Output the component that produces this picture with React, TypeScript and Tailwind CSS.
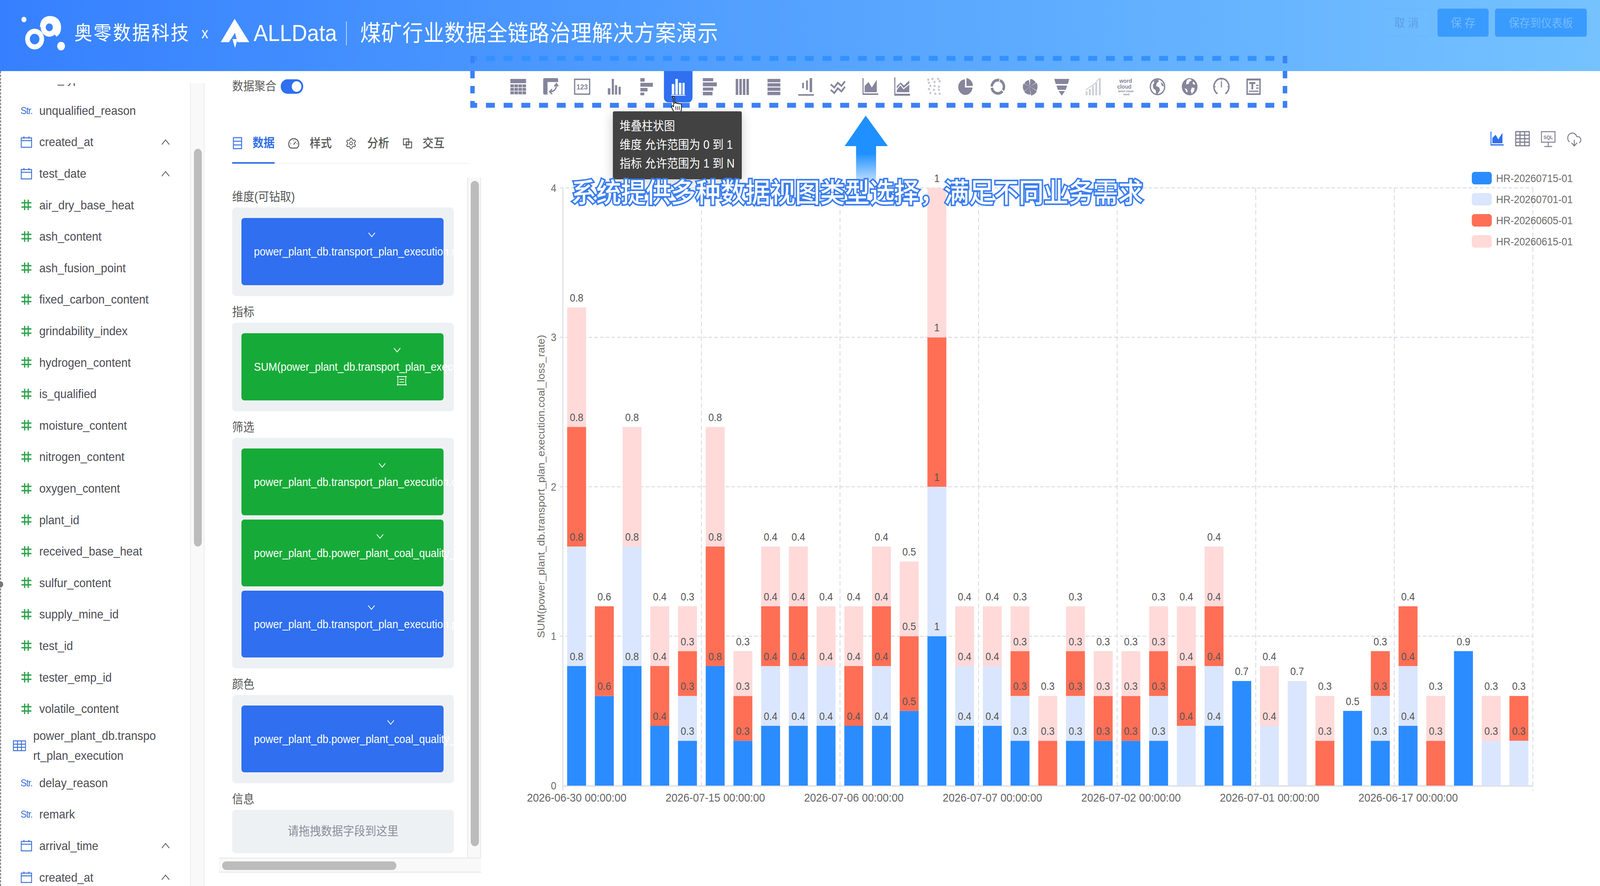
import { ReactNode } from 'react';
import { CloudDownload, Settings } from 'lucide-react';

type FieldType = 'str' | 'date' | 'num' | 'none';

const fieldsTop: [string, FieldType][] = [
  ['test_type', 'none'],
  ['unqualified_reason', 'str'],
  ['created_at', 'date'],
  ['test_date', 'date'],
  ['air_dry_base_heat', 'num'],
  ['ash_content', 'num'],
  ['ash_fusion_point', 'num'],
  ['fixed_carbon_content', 'num'],
  ['grindability_index', 'num'],
  ['hydrogen_content', 'num'],
  ['is_qualified', 'num'],
  ['moisture_content', 'num'],
  ['nitrogen_content', 'num'],
  ['oxygen_content', 'num'],
  ['plant_id', 'num'],
  ['received_base_heat', 'num'],
  ['sulfur_content', 'num'],
  ['supply_mine_id', 'num'],
  ['test_id', 'num'],
  ['tester_emp_id', 'num'],
  ['volatile_content', 'num'],
];

const fieldsBottom: [string, FieldType][] = [
  ['delay_reason', 'str'],
  ['remark', 'str'],
  ['arrival_time', 'date'],
  ['created_at', 'date'],
];

// blue, light blue, red, pink
const bars: number[][] = [
  [0.8, 0.8, 0.8, 0.8], [0.6, 0, 0.6, 0], [0.8, 0.8, 0, 0.8], [0.4, 0, 0.4, 0.4], [0.3, 0.3, 0.3, 0.3],
  [0.8, 0, 0.8, 0.8], [0.3, 0, 0.3, 0.3], [0.4, 0.4, 0.4, 0.4], [0.4, 0.4, 0.4, 0.4], [0.4, 0.4, 0, 0.4],
  [0.4, 0, 0.4, 0.4], [0.4, 0.4, 0.4, 0.4], [0.5, 0, 0.5, 0.5], [1, 1, 1, 1], [0.4, 0.4, 0, 0.4],
  [0.4, 0.4, 0, 0.4], [0.3, 0.3, 0.3, 0.3], [0, 0, 0.3, 0.3], [0.3, 0.3, 0.3, 0.3], [0.3, 0, 0.3, 0.3],
  [0.3, 0, 0.3, 0.3], [0.3, 0.3, 0.3, 0.3], [0, 0.4, 0.4, 0.4], [0.4, 0.4, 0.4, 0.4], [0.7, 0, 0, 0],
  [0, 0.4, 0, 0.4], [0, 0.7, 0, 0], [0, 0, 0.3, 0.3], [0.5, 0, 0, 0], [0.3, 0.3, 0.3, 0],
  [0.4, 0.4, 0.4, 0], [0, 0, 0.3, 0.3], [0.9, 0, 0, 0], [0, 0.3, 0, 0.3], [0, 0.3, 0.3, 0],
];

const barColors = ['#2b8cff', '#dae6fd', '#ff6f56', '#ffdad9'];
const xLabels = ['2026-06-30', '2026-07-15', '2026-07-06', '2026-07-07', '2026-07-02', '2026-07-01', '2026-06-17'];
const legend = ['HR-20260715-01', 'HR-20260701-01', 'HR-20260605-01', 'HR-20260615-01'];

const UNIT = 382.5;
const BASE = 2011;
const STEP = 77.6;
const LEFT = 1576;

const segments = bars.flatMap((vals, i) => {
  let acc = 0;
  return vals.flatMap((v, s) => {
    if (!v) return [];
    acc += v;
    return [{ id: `${i}-${s}`, x: LEFT + STEP * i + 12, top: BASE - acc * UNIT, h: v * UNIT, v, color: barColors[s] }];
  });
});

const wedge = (a0: number, a1: number, r: number) => {
  const p = (a: number) => `${24 + r * Math.sin((a * Math.PI) / 180)} ${24 - r * Math.cos((a * Math.PI) / 180)}`;
  return `M24 24 L${p(a0)} A${r} ${r} 0 0 1 ${p(a1)} Z`;
};

const FieldIcon = ({ type }: { type: FieldType }) => {
  if (type === 'str') {
    return <span className="whitespace-nowrap text-[26px] leading-none font-medium tracking-[-1.5px] text-[#3f73d8]">Str.</span>;
  }
  if (type === 'date') {
    return (
      <svg width="32" height="31" viewBox="0 0 32 31" fill="none" stroke="#3f73d8" strokeWidth="2.5">
        <rect x="1.5" y="5" width="29" height="24" />
        <path d="M1.5 12H30.5M9 1V7M23 1V7" />
      </svg>
    );
  }
  if (type === 'num') {
    return (
      <svg width="32" height="29" viewBox="0 0 32 29" fill="none" stroke="#2ca24c" strokeWidth="3.5">
        <path d="M2 9H30M2 20H30M11 1V28M21 1V28" />
      </svg>
    );
  }
  return <span className="w-[32px]" />;
};

const Field = ({ name, type }: { name: string; type: FieldType }) => (
  <div className="flex h-[80.6px] items-center pl-[55px] pr-[57px]">
    <div className="flex w-[32px] justify-center">
      <FieldIcon type={type} />
    </div>
    <span className="ml-[20px] flex-1 text-[32px] text-[#4c4c54]">{name}</span>
    {type === 'date' && (
      <svg width="23" height="17" viewBox="0 0 23 17" fill="none" stroke="#555" strokeWidth="2">
        <path d="M1 15L11.5 3L22 15" />
      </svg>
    )}
  </div>
);

const Chevron = ({ className = '' }: { className?: string }) => (
  <svg className={className} width="20" height="14" viewBox="0 0 20 14" fill="none" stroke="#fff" strokeWidth="2">
    <path d="M1 2L10 12L19 2" />
  </svg>
);

const Pill = ({ text, color, tall, chevronClass, extra }: { text: string; color: string; tall?: boolean; chevronClass?: string; extra?: ReactNode }) => (
  <div className={`${tall ? 'h-[172px]' : 'h-[171px]'} w-[566px] rounded-[8px] pl-[35px] pt-[33px] text-white ${color}`}>
    <div className="inline-flex w-max flex-col items-center">
      <Chevron className={chevronClass} />
      <div className="mt-[10px] flex h-[52px] items-center whitespace-nowrap text-[29.3px]">{text}</div>
      {extra}
    </div>
  </div>
);

const Section = ({ label, children }: { label: string; children: ReactNode }) => (
  <div>
    <div className="mt-[14px] flex h-[54px] items-center text-[31px] text-[#555]">{label}</div>
    {children}
  </div>
);

const Box = ({ children }: { children: ReactNode }) => (
  <div className="flex w-[621px] flex-col gap-[11px] overflow-hidden rounded-[10px] bg-[#eef1f4] pb-[28px] pl-[26px] pt-[27px]">{children}</div>
);

const ChartIcon = ({ i }: { i: number }) => {
  const c = 'currentColor';
  const rows = [0, 1, 2, 3];
  switch (i) {
    case 0:
      return (
        <g fill={c}>
          <rect x="2" y="4" width="44" height="11" />
          {[18, 27, 36].map(y => rows.map(k => <rect key={`${y}${k}`} x={2 + k * 11.3} y={y} width="10" height="7.5" />))}
        </g>
      );
    case 1:
      return (
        <g>
          <path fill={c} d="M4 6a4 4 0 0 1 4-4h34a4 4 0 0 1 4 4v6H16v32h-8a4 4 0 0 1-4-4z" />
          <path fill="none" stroke={c} strokeWidth="3.5" d="M41 17c1 12-6 19-17 20M35 23l6-7 5 7M29 30l-7 7 7 6" />
        </g>
      );
    case 2:
      return (
        <g>
          <rect x="3" y="5" width="42" height="38" fill="none" stroke={c} strokeWidth="3.5" />
          <text x="24" y="31" textAnchor="middle" fontSize="19" fill={c} fontWeight="700">123</text>
        </g>
      );
    case 3:
      return (
        <g fill={c}>
          <rect x="6" y="28" width="7" height="16" />
          <rect x="17" y="4" width="6" height="40" />
          <rect x="26" y="20" width="6" height="24" />
          <rect x="36" y="24" width="6" height="20" />
        </g>
      );
    case 4:
      return (
        <g fill={c}>
          <rect x="8" y="2" width="12" height="9" />
          <rect x="8" y="14" width="35" height="10" />
          <rect x="8" y="27" width="20" height="9" />
          <rect x="8" y="39" width="11" height="7" />
        </g>
      );
    case 5:
      return (
        <g fill={c}>
          <rect x="6" y="17" width="7" height="27" />
          <rect x="16" y="4" width="7" height="40" />
          <rect x="26" y="14" width="7" height="30" />
          <rect x="36" y="14" width="6" height="30" />
          <rect x="4" y="45" width="40" height="2" />
        </g>
      );
    case 6:
      return (
        <g fill={c}>
          <rect x="4" y="2" width="29" height="8" />
          <rect x="4" y="13" width="39" height="10" />
          <rect x="4" y="26" width="29" height="8" />
          <rect x="4" y="37" width="27" height="9" />
        </g>
      );
    case 7:
      return <g fill={c}>{rows.map(k => <rect key={k} x={6 + k * 10} y="4" width="7" height="41" />)}</g>;
    case 8:
      return <g fill={c}>{rows.map(k => <rect key={k} x="6" y={4 + k * 11} width="36" height="8.5" />)}</g>;
    case 9:
      return (
        <g fill={c}>
          <rect x="2" y="43" width="44" height="4" />
          <rect x="13" y="14" width="5" height="14" />
          <rect x="24" y="8" width="5" height="24" />
          <rect x="34" y="2" width="7" height="36" />
        </g>
      );
    case 10:
      return <path fill="none" stroke={c} strokeWidth="4.5" d="M4 18L14 26L24 14L34 22L44 10M4 32L14 40L24 28L34 36L44 24" />;
    case 11:
      return (
        <g fill={c}>
          <path d="M3 2h3v39h41v4H3z" />
          <path d="M9 38V22l11-10 9 14 14-20v32z" />
        </g>
      );
    case 12:
      return (
        <g>
          <path fill={c} d="M3 0h3v42h41v5H3zM10 38V22l11-9 9 8 15-13v30z" />
          <path fill="none" stroke="#fff" strokeWidth="2.5" d="M9 32l11-13 9 10 16-12" />
        </g>
      );
    case 13:
      return (
        <g fill={c} opacity="0.45">
          {[[8, 6], [20, 4], [36, 4], [10, 14], [26, 12], [40, 10], [14, 22], [26, 22], [38, 24], [10, 30], [24, 32], [38, 32], [14, 40], [28, 42], [40, 42]].map(([x, y]) => (
            <circle key={`${x}${y}`} cx={x} cy={y} r="3" />
          ))}
        </g>
      );
    case 14:
      return (
        <g fill={c}>
          <path d="M22 5A20 20 0 1 0 43 26H22z" />
          <path d="M26 2A20 20 0 0 1 44 22H26z" />
        </g>
      );
    case 15:
      return <circle cx="24" cy="24" r="17" fill="none" stroke={c} strokeWidth="7" strokeDasharray="30 3 38 3 30 3" transform="rotate(-70 24 24)" />;
    case 16:
      return (
        <g fill={c}>
          <path d={wedge(5, 60, 20)} />
          <path d={wedge(63, 115, 22)} />
          <path d={wedge(118, 170, 23)} />
          <path d={wedge(173, 230, 20)} />
          <path d={wedge(233, 295, 19)} />
          <path d={wedge(298, 355, 17)} />
        </g>
      );
    case 17:
      return (
        <g fill={c}>
          <path d="M3 4h42l-4 13H7z" />
          <path d="M9 21h30l-4 11H13z" />
          <path d="M15 35h18l-9 12z" />
        </g>
      );
    case 18:
      return (
        <g opacity="0.4">
          <g fill={c}>
            <rect x="2" y="36" width="5" height="10" />
            <rect x="11" y="30" width="5" height="16" />
            <rect x="20" y="22" width="5" height="24" />
            <rect x="29" y="14" width="5" height="32" />
            <rect x="39" y="2" width="5" height="44" />
          </g>
          <path d="M2 32L28 16L38 4" fill="none" stroke={c} strokeWidth="2.5" />
        </g>
      );
    case 19:
      return (
        <g fill={c} textAnchor="middle" fontWeight="700">
          <text x="24" y="14" fontSize="15">word</text>
          <text x="20" y="29" fontSize="15">cloud</text>
          <text x="24" y="38" fontSize="8">word cloud</text>
          <text x="26" y="46" fontSize="7">word</text>
        </g>
      );
    case 20:
      return (
        <g>
          <circle cx="24" cy="24" r="20" fill="none" stroke={c} strokeWidth="3.5" />
          <path fill={c} d="M14 8l11-3 3 5-6 5-2 7 9 4 2 7-7 10-4-1-1-9-7-5-1-9 4-4zM33 12l6 4 3 8-6-3z" />
        </g>
      );
    case 21:
      return (
        <g>
          <circle cx="24" cy="24" r="22" fill={c} />
          <path fill="#fff" d="M17 6l9-2 4 4-6 3-3 6-7 1 1-7zM34 10l6 7-4 2-4-4zM30 26l8 1-2 9-6 6-3-7zM10 28l6 2 3 7-4 1z" />
        </g>
      );
    case 22:
      return (
        <g fill="none" stroke={c} strokeWidth="4">
          <path d="M13 42A21 21 0 1 1 35 42" />
          <path d="M24 10V26" strokeWidth="3" />
          <path d="M2 24h6M40 24h6M24 3v5" strokeWidth="2" />
        </g>
      );
    default:
      return (
        <g fill={c}>
          <path d="M4 3h40v42H4zM8 8v33h32V8z" fillRule="evenodd" />
          <rect x="12" y="12" width="17" height="5" />
          <rect x="18" y="12" width="5" height="19" />
          <rect x="31" y="19" width="7" height="3" />
          <rect x="31" y="26" width="7" height="3" />
          <rect x="11" y="34" width="27" height="3" />
        </g>
      );
  }
};

const Toolbar = () => (
  <div className="flex h-[80px] gap-[9.5px] pl-[64px]">
    {Array.from({ length: 24 }, (_, i) => (
      <div key={i} className={`flex h-[80px] w-[80px] items-center justify-center rounded-b-[12px] ${i === 5 ? 'bg-[#2f6ff0] text-white' : 'text-[#85859c]'}`}>
        <svg width="48" height="48" viewBox="0 0 48 48">
          <ChartIcon i={i} />
        </svg>
      </div>
    ))}
  </div>
);

const ViewIcons = () => (
  <div className="flex h-[133px] items-start justify-end gap-[30px] pr-[50px] pt-[73px] text-[#7d7d90]">
    <svg className="text-[#2f6ff0]" width="42" height="40" viewBox="0 0 48 48">
      <ChartIcon i={11} />
    </svg>
    <svg width="42" height="40" viewBox="0 0 42 40" fill="none" stroke="currentColor" strokeWidth="3">
      <rect x="2" y="2" width="38" height="36" />
      <path d="M2 11H40M2 20H40M2 29H40M14 2V38M27 2V38" />
    </svg>
    <svg width="42" height="42" viewBox="0 0 42 42" fill="none" stroke="currentColor" strokeWidth="2.5">
      <rect x="2" y="2" width="38" height="27" />
      <path d="M21 29V39M10 40H32" />
      <text x="21" y="21" textAnchor="middle" fontSize="13" fontWeight="700" fill="currentColor" stroke="none">SQL</text>
    </svg>
    <CloudDownload size={44} strokeWidth={1.4} />
  </div>
);

const Chart = () => (
  <svg className="block" width="3133" height="1873" viewBox="1347 395 3133 1873" fontSize="27.5">
    {[1, 2, 3, 4].map(v => (
      <line key={v} x1={LEFT - 8} x2="4293" y1={BASE - v * UNIT} y2={BASE - v * UNIT} stroke="#d9dce3" strokeWidth="2.5" strokeDasharray="10 6" />
    ))}
    {[1, 2, 3, 4, 5, 6, 7].map(k => (
      <line key={k} x1={LEFT + k * 388} x2={LEFT + k * 388} y1="481" y2="2024" stroke="#d9dce3" strokeWidth="2.5" strokeDasharray="12 7" />
    ))}
    <line x1={LEFT} x2={LEFT} y1="481" y2="2024" stroke="#dcdfe6" strokeWidth="3" />
    <line x1={LEFT} x2="4293" y1="2012" y2="2012" stroke="#dcdfe6" strokeWidth="3.5" />
    <text transform="rotate(-90 1517 1245)" x="1517" y="1245" textAnchor="middle" dominantBaseline="middle" fill="#6e6e6e">
      SUM(power_plant_db.transport_plan_execution.coal_loss_rate)
    </text>
    {[0, 1, 2, 3, 4].map(v => (
      <text key={v} x="1550" y={BASE - v * UNIT + 10} textAnchor="middle" fill="#6b6b6b">{v}</text>
    ))}
    {segments.map(s => (
      <rect key={s.id} x={s.x} y={s.top} width="53" height={s.h} fill={s.color} />
    ))}
    {segments.map(s => (
      <text key={s.id} x={s.x + 26.5} y={s.top - 15} textAnchor="middle" fill="#555">{s.v}</text>
    ))}
    {xLabels.map((d, k) => (
      <text key={d} x={LEFT + STEP * (5 * k + 0.5)} y="2052" textAnchor="middle" fill="#666" fontSize="30">{`${d} 00:00:00`}</text>
    ))}
    {legend.map((l, k) => (
      <g key={l}>
        <rect x="4121" y={440 + k * 54} width="56" height="32" rx="8" fill={barColors[k]} />
        <text x="4189" y={466 + k * 54} fontSize="28" fill="#6b6b6b">{l}</text>
      </g>
    ))}
  </svg>
);

const Annotations = () => (
  <>
    <svg className="absolute left-0 top-0" width="4480" height="2268" viewBox="0 0 4480 2268" fill="none" strokeWidth="12.5">
      <defs>
        <linearGradient id="shaft" x1="0" x2="0" y1="0" y2="1">
          <stop offset="0.2" stopColor="#1e90ff" />
          <stop offset="1" stopColor="#c4e0ff" />
        </linearGradient>
      </defs>
      <line x1="1317" x2="3604" y1="149.5" y2="149.5" stroke="#3391ff" strokeDasharray="25 24.6" strokeDashoffset="6" />
      <line x1="1317" x2="3604" y1="269.5" y2="269.5" stroke="#3b80f6" strokeDasharray="25 24.6" strokeDashoffset="6" />
      <line x1="1323" x2="1323" y1="143" y2="276" stroke="#3b80f6" strokeDasharray="19 19.5" />
      <line x1="3598" x2="3598" y1="143" y2="276" stroke="#3b80f6" strokeDasharray="19 19.5" />
      <polygon points="2424,296 2486,374 2365,374" fill="#1e90ff" />
      <rect x="2397" y="374" width="56" height="92" fill="url(#shaft)" />
    </svg>
    <svg className="absolute left-[1878px] top-[245px]" width="32" height="46" viewBox="0 0 32 46" fill="#fff" stroke="#111" strokeWidth="2">
      <path d="M5 3c2-2 6-1 6 3v13l3-1c2 0 3 1 3 2l3-1c2 0 3 1 3 2l3-1c2 0 4 2 4 4v10c0 5-3 9-4 11H11c-2-4-9-14-9-17 0-2 3-3 5-1l1 2V7c-1-1-3-3-3-4z" />
      <path d="M14 27v9M19 27v9M24 27v9" fill="none" strokeWidth="1.5" />
    </svg>
    <div className="absolute left-[1716px] top-[285px] h-[174px] w-[361px] rounded-[4px] bg-[#424242] pl-[19px] pt-[14px] text-[31px] leading-[48px] text-white shadow-[0_6px_30px_rgba(0,0,0,0.2)]">
      <div>堆叠柱状图</div>
      <div>维度 允许范围为 0 到 1</div>
      <div>指标 允许范围为 1 到 N</div>
    </div>
    <div className="absolute left-[1600px] top-[458px] whitespace-nowrap text-[69.6px] font-medium leading-[72px] text-white [-webkit-text-stroke:8px_#3b7ef0] [paint-order:stroke_fill]">
      系统提供多种数据视图类型选择，满足不同业务需求
    </div>
  </>
);

const Logo = () => (
  <svg width="123" height="88" viewBox="60 41 123 88" fill="#fff">
    <circle cx="67" cy="50" r="7" />
    <circle cx="171" cy="118" r="11" />
    <circle cx="97" cy="100" r="20" fill="none" stroke="#fff" strokeWidth="13" />
    <circle cx="138" cy="70" r="17" fill="none" stroke="#fff" strokeWidth="14" />
    <path d="M112 70C112 50 124 41 140 41C158 41 171 52 171 70C171 80 168 88 158 94L150 84C156 78 158 74 158 68C158 60 150 52 138 54Z" />
  </svg>
);

const AllDataMark = () => (
  <svg width="80" height="75" viewBox="617 48 80 75" fill="#fff">
    <path d="M656 48L697 108L664 108L657 84L640 108L617 108Z" />
    <path d="M650 100L664 100L657 123Z" />
  </svg>
);

const Header = () => (
  <div className="flex h-[182px] shrink-0 bg-linear-to-r from-[#3680ff] to-[#75c2ff] pt-[41px]">
    <div className="ml-[60px] flex h-[88px] items-center text-white">
      <Logo />
      <span className="ml-[25px] text-[50px] leading-none tracking-[4px]">奥零数据科技</span>
      <span className="ml-[32px] text-[38px] leading-none">x</span>
      <div className="ml-[35px]"><AllDataMark /></div>
      <span className="ml-[12px] text-[60px] leading-none">ALLData</span>
      <div className="ml-[25px] h-[61px] w-[2px] bg-white/70" />
      <span className="ml-[38px] text-[58px] leading-none tracking-[1px]">煤矿行业数据全链路治理解决方案演示</span>
    </div>
    <div className="ml-auto mr-[37px] mt-[-19px] flex h-[72px] gap-[18px] text-[30px]">
      <div className="flex w-[138px] items-center justify-center rounded-[6px] border-2 border-[#6cb6fc] text-[#5d9fe0]">取 消</div>
      <div className="flex w-[143px] items-center justify-center rounded-[6px] bg-[#3a9bff] text-[#74bbff]">保 存</div>
      <div className="flex w-[257px] items-center justify-center rounded-[6px] bg-[#3a9bff] text-[#74bbff]">保存到仪表板</div>
    </div>
  </div>
);

const FieldList = () => (
  <div className="relative flex w-[573px] border-l-[3px] border-dashed border-[#8a8a8a] pt-[31px]">
    <div className="absolute left-[-3px] top-[1306px] h-[16px] w-[9px] rounded-r-full bg-[#777]" />
    <div className="flex-1 overflow-hidden">
      <div className="-mt-[51px]">
        {fieldsTop.map(([name, type]) => <Field key={name} name={name} type={type} />)}
        <div className="flex h-[109px] items-center pl-[33px]">
          <svg width="37" height="28" viewBox="0 0 37 28" fill="none" stroke="#3f73d8" strokeWidth="2.5">
            <rect x="1.5" y="1.5" width="34" height="25" />
            <path d="M1.5 10H35.5M1.5 18H35.5M13 1.5V26.5M24 1.5V26.5" />
          </svg>
          <span className="ml-[20px] w-[350px] break-all text-[32px] leading-[51px] text-[#4c4c54]">power_plant_db.transport_plan_execution</span>
        </div>
        {fieldsBottom.map(([name, type]) => <Field key={`b-${name}`} name={name} type={type} />)}
      </div>
    </div>
    <div className="w-[41px] border-x-[3px] border-[#f0f0f0] bg-[#f9f9f9] pl-[8px] pt-[168px]">
      <div className="h-[1018px] w-[22px] rounded-full bg-[#bcbcbc]" />
    </div>
  </div>
);

const TabIcon = ({ i }: { i: number }) => {
  if (i === 0) {
    return (
      <svg className="text-[#3370e8]" width="26" height="31" viewBox="0 0 26 31" fill="none" stroke="currentColor" strokeWidth="2.5">
        <rect x="1.5" y="1.5" width="23" height="28" />
        <path d="M1.5 10.5H24.5M1.5 20H24.5" />
      </svg>
    );
  }
  if (i === 1) {
    return (
      <svg width="31" height="28" viewBox="0 0 31 28" fill="none" stroke="#555" strokeWidth="2.5">
        <path d="M7 26C3 24 1.5 20 1.5 16C1.5 8 7.5 2 15.5 2S29.5 8 29.5 16C29.5 20 28 24 24 26Z" />
        <path d="M15 17L21 10M6 15H8M15 6V8M24 15H26" />
      </svg>
    );
  }
  if (i === 2) return <Settings className="text-[#555]" size={32} strokeWidth={1.6} />;
  return (
    <svg width="26" height="26" viewBox="0 0 26 26" fill="none" stroke="#555" strokeWidth="2.5">
      <rect x="1.5" y="1.5" width="15" height="15" />
      <rect x="9.5" y="9.5" width="15" height="15" />
    </svg>
  );
};

const ConfigPanel = () => (
  <div className="flex w-[774px] flex-col">
    <div className="pl-[77px] pt-[21px]">
      <div className="flex h-[37px] items-center gap-[12px] text-[31px] text-[#5a5a5a]">
        数据聚合
        <div className="flex h-[37px] w-[63px] items-center justify-end rounded-full bg-[#2f6ff0] pr-[5px]">
          <div className="h-[27px] w-[27px] rounded-full bg-white" />
        </div>
      </div>
      <div className="mt-[100px] flex h-[79px] w-[663px] gap-[38px] border-b-2 border-[#f2f2f2] text-[31px] font-medium text-[#555]">
        {['数据', '样式', '分析', '交互'].map((t, i) => (
          <div key={t} className={`flex items-center gap-[29px] pb-[23px] ${i === 0 ? '-mb-[2px] border-b-4 border-[#3370e8] pl-[2px] font-bold text-[#3370e8]' : ''}`}>
            <TabIcon i={i} />
            {t}
          </div>
        ))}
      </div>
    </div>
    <div className="ml-[40px] mt-[36px] flex h-[1740px]">
      <div className="w-[695px] overflow-hidden pl-[37px] pt-[8px]">
        <Section label="维度(可钻取)">
          <Box><Pill tall color="bg-[#2f6ff0]" text="power_plant_db.transport_plan_execution.route_id" /></Box>
        </Section>
        <Section label="指标">
          <Box>
            <Pill
              tall
              color="bg-[#16ab38]"
              chevronClass="mr-[26px]"
              text="SUM(power_plant_db.transport_plan_execution.coal_loss_rate)"
              extra={
                <svg className="mt-[-4px]" width="30" height="27" viewBox="0 0 30 27" fill="none" stroke="#fff" strokeWidth="2">
                  <path d="M4 1V26M26 1V26M1 3H29M1 24H29M8 10H22M8 17H22" />
                </svg>
              }
            />
          </Box>
        </Section>
        <Section label="筛选">
          <Box>
            <Pill color="bg-[#16ab38]" text="power_plant_db.transport_plan_execution.coal_volume" />
            <Pill color="bg-[#16ab38]" text="power_plant_db.power_plant_coal_quality_test.test_id" />
            <Pill color="bg-[#2f6ff0]" text="power_plant_db.transport_plan_execution.plan_no" />
          </Box>
        </Section>
        <Section label="颜色">
          <Box><Pill color="bg-[#2f6ff0]" text="power_plant_db.power_plant_coal_quality_test.is_qualified" /></Box>
        </Section>
        <Section label="信息">
          <div className="flex h-[111px] w-[621px] items-center justify-center rounded-[10px] bg-[#eef1f4] text-[31px] text-[#8a8f9c]">请拖拽数据字段到这里</div>
        </Section>
      </div>
      <div className="w-[39px] border-x-[3px] border-[#ececec] bg-[#f9f9f9] pl-[7px] pt-[8px]">
        <div className="h-[1703px] w-[23px] rounded-full bg-[#bcbcbc]" />
      </div>
    </div>
    <div className="ml-[40px] h-[39px] border-y-[3px] border-[#ececec] bg-[#f9f9f9] pl-[9px] pt-[7px]">
      <div className="h-[22px] w-[488px] rounded-full bg-[#bcbcbc]" />
    </div>
  </div>
);

export default function App() {
  // the layout is measured on 4480px, squeeze it when the window is narrower
  const fit = window.innerWidth / 4480;

  return (
    <div className="h-[2268px] w-full overflow-hidden">
      <div
        className="relative flex h-[2268px] w-[4480px] origin-top-left flex-col overflow-hidden bg-white [font-family:'Liberation_Sans','Noto_Sans_CJK_SC',sans-serif]"
        style={{ transform: `scaleX(${fit})` }}
      >
        <Header />
        <div className="flex h-[2086px] shrink-0 overflow-hidden">
          <FieldList />
          <ConfigPanel />
          <div className="flex-1">
            <Toolbar />
            <ViewIcons />
            <Chart />
          </div>
        </div>
        <Annotations />
      </div>
    </div>
  );
}
